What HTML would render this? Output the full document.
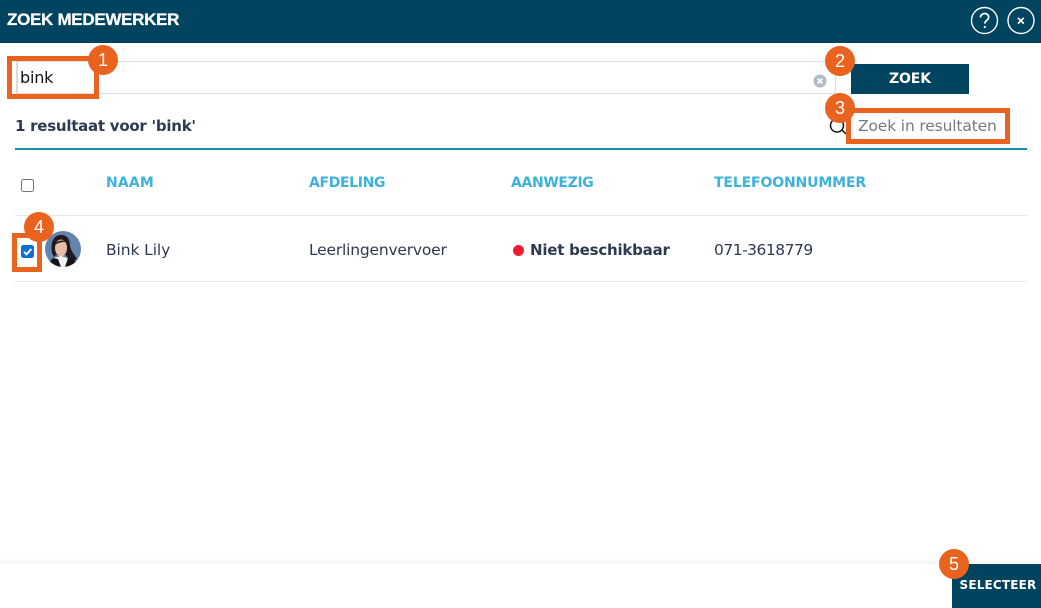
<!DOCTYPE html>
<html><head><meta charset="utf-8"><style>
html,body{margin:0;padding:0;width:1041px;height:608px;overflow:hidden;background:#fff}
body{position:relative;font-family:"DejaVu Sans","Liberation Sans",sans-serif;color:#2e3a50}
.a{position:absolute;white-space:nowrap;box-sizing:border-box}
.t{line-height:20px;height:20px}
.h{font-size:14px;font-weight:700;color:#3db2dc;top:173px}
.c{width:30px;height:30px;border-radius:50%;background:#e9631f;color:#fff;font-size:18px;line-height:30px;text-align:center;font-family:"Liberation Sans",sans-serif}
.o{border:5px solid #e9631f}
</style></head><body>
<div class="a" style="left:0;top:0;width:1041px;height:43px;background:#00445f"></div>
<div class="a t" style="left:7px;top:10px;color:#fff;font-size:17px;font-weight:700;font-family:'Liberation Sans',sans-serif;letter-spacing:-.3px;-webkit-text-stroke:.3px #fff">ZOEK MEDEWERKER</div>
<svg class="a" style="left:965px;top:3px" width="76" height="36" viewBox="0 0 76 36" fill="none" stroke="#fff">
<circle cx="19.500" cy="17.500" r="13" stroke-width="1.400"/>
<path d="M15.500 14.500c0-2.500 2-4 4.200-4s4 1.500 4 3.700c0 3-3.800 3-3.800 6.300" stroke-width="1.700"/>
<circle cx="19.800" cy="24" r="1.100" fill="#fff" stroke="none"/>
<circle cx="56" cy="17.500" r="13" stroke-width="1.400"/>
<path d="M53 14.800l5.800 5.800M58.800 14.800l-5.800 5.800" stroke-width="1.700"/>
</svg>

<div class="a" style="left:16px;top:61px;width:820px;height:33px;border:1px solid #ddd;border-left-width:2px"></div>
<div class="a t" style="left:20px;top:68px;color:#111;font-size:16px;font-family:'DejaVu Sans',sans-serif;letter-spacing:-.2px">bink</div>
<svg class="a" style="left:813px;top:74px" width="14" height="14" viewBox="0 0 14 14"><circle cx="7" cy="7" r="6.500" fill="#b4bac4"/><path d="M4.700 4.700l4.600 4.600M9.300 4.700l-4.600 4.600" stroke="#fff" stroke-width="2"/></svg>
<div class="a o" style="left:7px;top:56px;width:92px;height:43px"></div>
<div class="a c" style="left:88px;top:45px">1</div>

<div class="a" style="left:851px;top:64px;width:118px;height:30px;background:#00445f;color:#fff;font-size:14px;font-weight:700;line-height:31px;text-align:center;letter-spacing:-.1px">ZOEK</div>
<div class="a c" style="left:825px;top:46px">2</div>

<div class="a t" style="left:15px;top:116px;font-size:15px;font-weight:700;letter-spacing:-.25px">1 resultaat voor 'bink'</div>

<svg class="a" style="left:827px;top:116px" width="22" height="22" viewBox="0 0 22 22" fill="none" stroke="#111" stroke-width="1.500"><circle cx="10" cy="9.500" r="6.500"/><path d="M15 14l4 4"/></svg>
<div class="a" style="left:851px;top:113px;width:154px;height:26px;background:#fff"></div>
<div class="a t" style="left:858px;top:116px;color:#77797e;font-size:15.500px;letter-spacing:-.15px">Zoek in resultaten</div>
<div class="a o" style="left:846px;top:108px;width:164px;height:36px"></div>
<div class="a c" style="left:825px;top:93px">3</div>

<div class="a" style="left:15px;top:148px;width:1012px;height:2px;background:#1b8fab"></div>

<div class="a" style="left:21px;top:179px;width:13px;height:13px;border:1.500px solid #767676;border-radius:2.500px;background:#fff"></div>
<div class="a t h" style="left:106px;letter-spacing:.15px">NAAM</div>
<div class="a t h" style="left:309px;letter-spacing:-.35px">AFDELING</div>
<div class="a t h" style="left:511px;letter-spacing:-.35px">AANWEZIG</div>
<div class="a t h" style="left:714px;letter-spacing:-.14px">TELEFOONNUMMER</div>
<div class="a" style="left:15px;top:215px;width:1012px;height:1px;background:#e8e8e8"></div>

<svg class="a" style="left:45px;top:231px" width="36" height="36" viewBox="0 0 36 36">
<defs><clipPath id="k"><circle cx="18" cy="18" r="18"/></clipPath></defs>
<g clip-path="url(#k)">
<rect width="36" height="36" fill="#6484b0"/>
<path d="M7 22C5 9 10 4 16 4c6 0 9 4 9 11 1 5 4 8 7 13l-6 4-5-8H11l-2 2z" fill="#201a1c"/>
<ellipse cx="16" cy="17" rx="6" ry="8.500" fill="#e6bca6"/>
<path d="M10 14c1-4 8-6 11-3-3 0-7 0-11 3z" fill="#201a1c"/>
<path d="M9 27l7-2 6 2 6 9H6z" fill="#f6f3f1"/>
<path d="M0 36l8-9 5 1 3 8zM36 36l-8-8-5-1-3 9z" fill="#14141a"/>
</g></svg>

<div class="a t" style="left:106px;top:240px;font-size:15.500px;letter-spacing:-.1px">Bink Lily</div>
<div class="a t" style="left:309px;top:240px;font-size:15.500px;letter-spacing:-.2px">Leerlingenvervoer</div>
<div class="a" style="left:513px;top:245px;width:11px;height:11px;border-radius:50%;background:#ee1c2e"></div>
<div class="a t" style="left:530px;top:240px;font-size:15px;font-weight:700;letter-spacing:-.22px">Niet beschikbaar</div>
<div class="a t" style="left:714px;top:240px;font-size:15.500px;letter-spacing:-.5px">071-3618779</div>
<div class="a" style="left:15px;top:281px;width:1012px;height:1px;background:#e8e8e8"></div>

<svg class="a" style="left:21px;top:245px" width="13" height="13" viewBox="0 0 13 13"><rect width="13" height="13" rx="2.500" fill="#0b6fd6"/><path d="M3 6.800l2.500 2.500 4.800-5.200" fill="none" stroke="#fff" stroke-width="2"/></svg>
<div class="a o" style="left:12px;top:233px;width:30px;height:39px"></div>
<div class="a c" style="left:24px;top:212px">4</div>

<div class="a" style="left:0;top:564px;width:1041px;height:44px;background:#fff;box-shadow:0 -2px 6px rgba(0,0,0,.07)"></div>
<div class="a" style="left:952px;top:564px;width:89px;height:44px;background:#00445f;color:#fff;font-size:12px;font-weight:700;line-height:43px;text-align:center;letter-spacing:.18px;padding-left:3px">SELECTEER</div>
<div class="a c" style="left:939px;top:549px">5</div>
</body></html>
